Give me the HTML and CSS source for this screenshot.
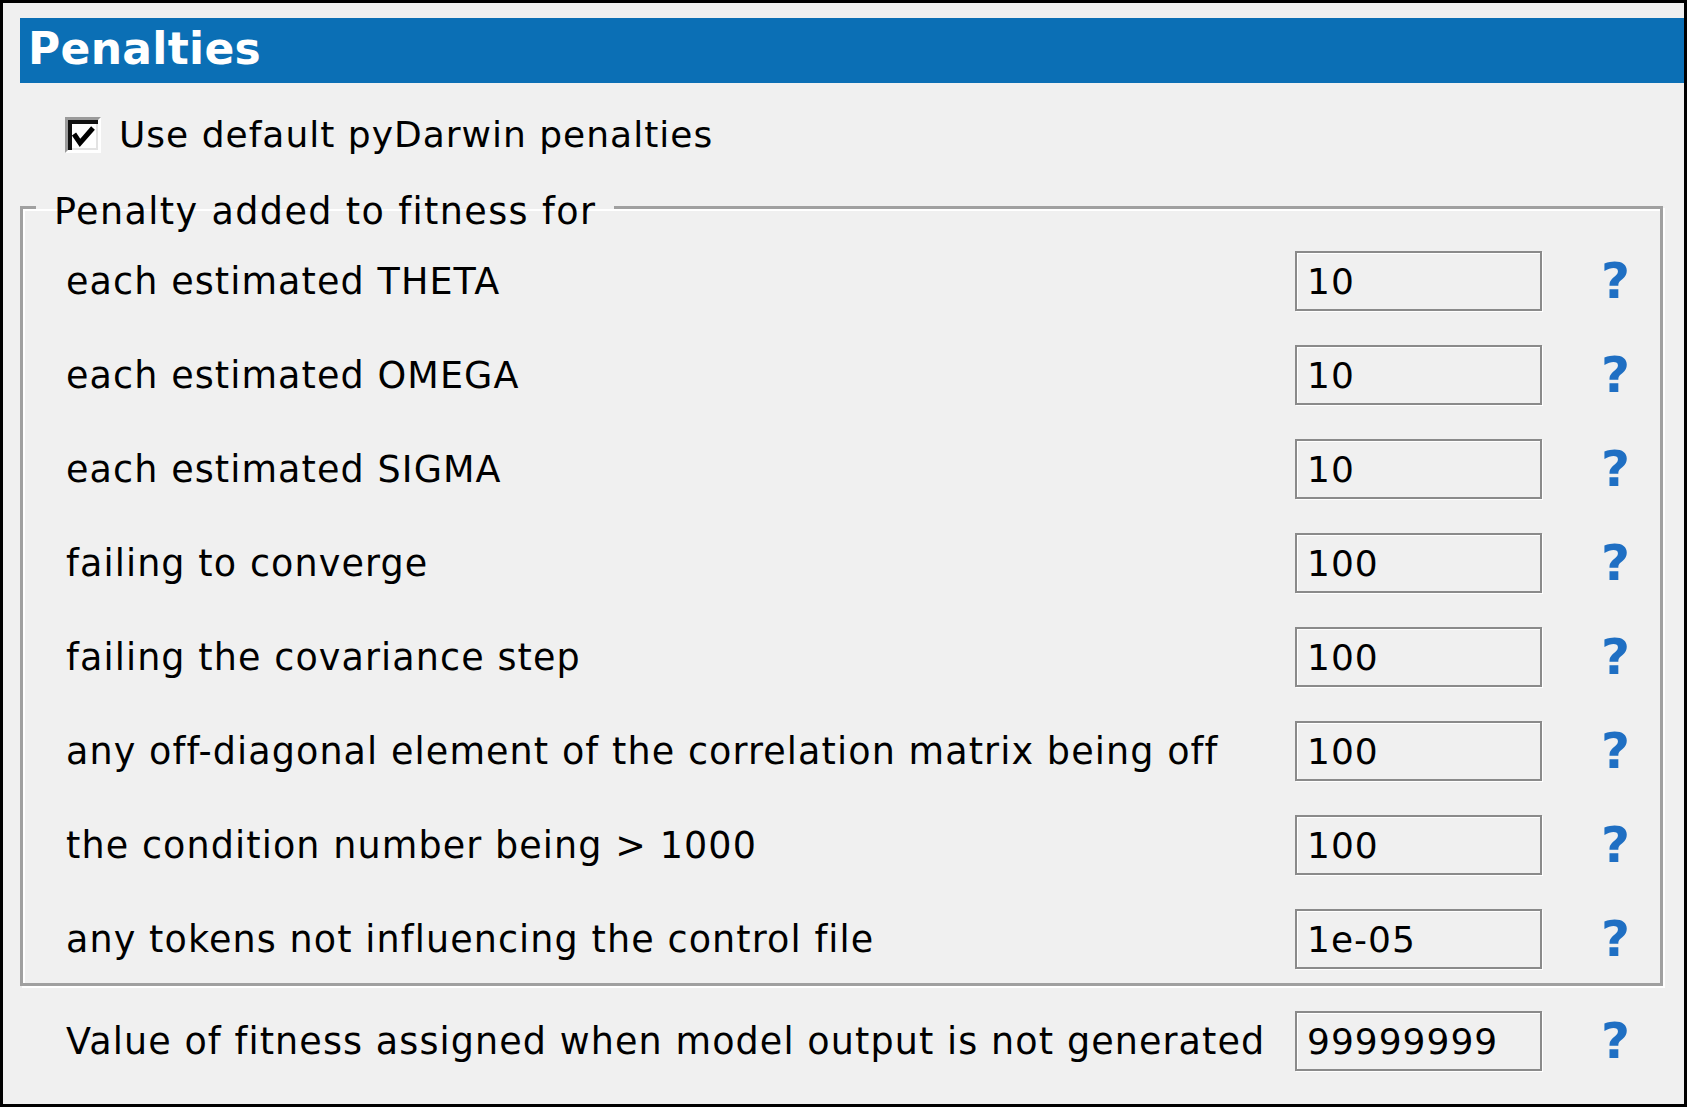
FILE: index.html
```html
<!DOCTYPE html>
<html lang="en">
<head>
    <meta charset="UTF-8">
    <title>Penalties</title>
    <link rel="stylesheet" href="styles.css">
</head>
<body>
    <div class="window">
        <div class="header">Penalties</div>

        <label class="check-row">
            <span class="check-box">
                <svg width="30" height="30" viewBox="0 0 30 30">
                    <polyline points="6,14 12,23 25,8" fill="none" stroke="#000" stroke-width="5"/>
                </svg>
            </span>
            <span class="check-text">Use default pyDarwin penalties</span>
        </label>

        <fieldset class="group">
            <legend>Penalty added to fitness for</legend>
            <div class="rows">
                <div class="row">
                    <span class="label">each estimated THETA</span>
                    <input class="field" type="text" value="10">
                    <span class="help">?</span>
                </div>
                <div class="row">
                    <span class="label">each estimated OMEGA</span>
                    <input class="field" type="text" value="10">
                    <span class="help">?</span>
                </div>
                <div class="row">
                    <span class="label">each estimated SIGMA</span>
                    <input class="field" type="text" value="10">
                    <span class="help">?</span>
                </div>
                <div class="row">
                    <span class="label">failing to converge</span>
                    <input class="field" type="text" value="100">
                    <span class="help">?</span>
                </div>
                <div class="row">
                    <span class="label">failing the covariance step</span>
                    <input class="field" type="text" value="100">
                    <span class="help">?</span>
                </div>
                <div class="row">
                    <span class="label">any off-diagonal element of the correlation matrix being off</span>
                    <input class="field" type="text" value="100">
                    <span class="help">?</span>
                </div>
                <div class="row">
                    <span class="label">the condition number being &gt; 1000</span>
                    <input class="field" type="text" value="100">
                    <span class="help">?</span>
                </div>
                <div class="row">
                    <span class="label">any tokens not influencing the control file</span>
                    <input class="field" type="text" value="1e-05">
                    <span class="help">?</span>
                </div>
            </div>
        </fieldset>

        <div class="row row-last">
            <span class="label">Value of fitness assigned when model output is not generated</span>
            <input class="field" type="text" value="99999999">
            <span class="help">?</span>
        </div>
    </div>
</body>
</html>
```

FILE: styles.css
```css
body {
    margin: 0;
    background-color: #f0f0f0;
    font-family: "DejaVu Sans", Verdana, sans-serif;
    color: #000;
}
.window {
    width: 1687px;
    height: 1107px;
    box-sizing: border-box;
    border: 3px solid #000;
    background-color: #f0f0f0;
    padding: 15px 0 0 17px;
    overflow: hidden;
}
.header {
    height: 65px;
    background-color: #0b6fb5;
    color: #fff;
    font-weight: bold;
    font-size: 44px;
    line-height: 62px;
    padding-left: 8px;
    letter-spacing: 0.3px;
}
.check-row {
    display: flex;
    align-items: center;
    margin: 34px 0 0 45px;
    height: 36px;
}
.check-box {
    width: 30px;
    height: 30px;
    border-top: 3px solid #9a9a9a;
    border-left: 3px solid #9a9a9a;
    border-right: 3px solid #fff;
    border-bottom: 3px solid #fff;
    background-color: #fff;
    box-shadow: inset 4px 4px 0 #111, inset -2px -2px 0 #e3e3e3;
    display: flex;
}
.check-text {
    font-size: 36px;
    letter-spacing: 1px;
    margin-left: 18px;
    line-height: 36px;
}
.group {
    margin: 29px 21px 0 0;
    padding: 0;
    border: 3px solid #a0a0a0;
    box-shadow: inset 2px 2px 0 #fff, 2px 2px 0 #fff;
    min-width: 0;
}
.group legend {
    font-size: 36.5px;
    letter-spacing: 1.4px;
    margin-left: 13px;
    padding: 10px 18px 0 18px;
    line-height: 40px;
}
.rows {
    display: flex;
    flex-direction: column;
    gap: 34px;
    padding: 18px 0 15px 0;
}
.row {
    display: grid;
    grid-template-columns: 1fr 247px 118px;
    align-items: center;
    height: 60px;
}
.label {
    font-size: 36.5px;
    letter-spacing: 1.1px;
    padding-left: 43px;
    white-space: nowrap;
}
.field {
    width: 247px;
    height: 60px;
    box-sizing: border-box;
    border: 2px solid #8a8a8a;
    box-shadow: 1px 1px 0 #fff, inset 1px 1px 0 #fff;
    background-color: #f0f0f0;
    font-family: "DejaVu Sans", Verdana, sans-serif;
    font-size: 36px;
    letter-spacing: 1px;
    color: #000;
    padding: 0 0 0 10px;
    margin: 0;
    outline: none;
}
.help {
    font-weight: bold;
    font-size: 50px;
    color: #1f6fc3;
    margin-left: 59px;
    line-height: 62px;
}
.row-last {
    margin: 24px 24px 0 3px;
}
```
